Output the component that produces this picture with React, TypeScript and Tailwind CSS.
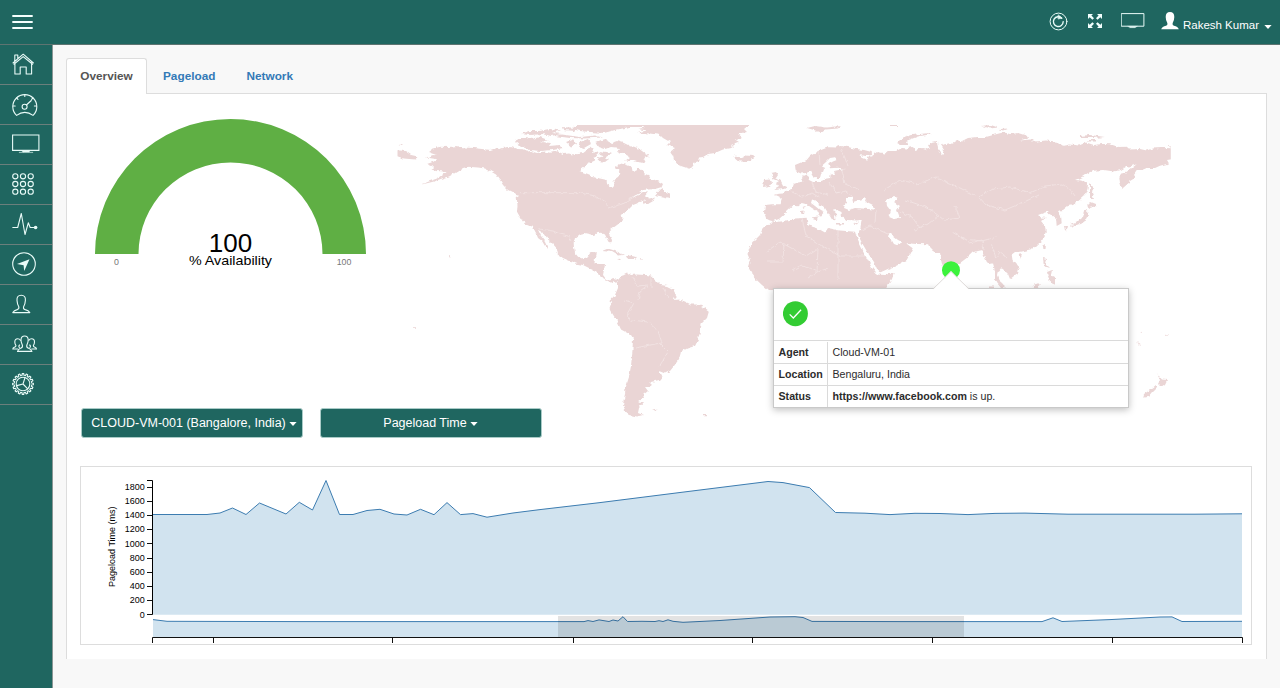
import React from "react";

const line = {
  fill: "none",
  stroke: "#e9fbf8",
  strokeWidth: 1.1,
  strokeLinejoin: "round" as const,
  strokeLinecap: "round" as const,
};

const gearPath = (() => {
  const teeth = 16;
  const pts: string[] = [];
  for (let i = 0; i < teeth; i++) {
    const a = (i / teeth) * Math.PI * 2;
    const s = (Math.PI * 2) / teeth;
    [
      [8.6, -0.3],
      [10.4, -0.2],
      [10.4, 0.2],
      [8.6, 0.3],
    ].forEach(([r, o]) => {
      const t = a + o * s;
      pts.push(`${(11 + r * Math.cos(t)).toFixed(2)},${(11 + r * Math.sin(t)).toFixed(2)}`);
    });
  }
  return `M${pts.join("L")}Z`;
})();

const sideIcons: React.ReactNode[] = [
  <svg key="home" width="23" height="24" viewBox="0 0 23 24" {...line}>
    <path d="M1 11 11.2 2.2 21.4 11M2.9 10.5V22H8.2V15H14.2V22H19.6V10.5M1.9 12.2 11.2 4.6 20.6 12.2M2.8 9V3H5.8V6.2" />
  </svg>,
  <svg key="gauge" width="26" height="24" viewBox="0 0 26 24" {...line}>
    <path d="M4.6 22.4A12 12 0 1 1 21 22.4Q12.8 16.3 4.6 22.4Z" />
    <circle cx="12.6" cy="13.8" r="2.5" />
    <path d="M14.4 12 19.3 7.5M12.8 1.5V3.5M4.6 5 6 6.4M1 13H3.2M22.4 13H24.6M19.6 6.4 21 5" />
  </svg>,
  <svg key="screen" width="28" height="20" viewBox="0 0 28 20" {...line} strokeLinejoin="miter">
    <path d="M.6 1H26.9V16.4H.6Z" />
    <path d="M9.5 16.5H18.3L17 18.2H21V18.6H7V18.2H11Z" fill="#e9fbf8" strokeWidth=".3" />
  </svg>,
  <svg key="grid" width="23" height="24" viewBox="0 0 23 24" {...line}>
    {[3.3, 11, 18.7].map((y) =>
      [3.3, 11, 18.7].map((x) => <circle key={`${x}-${y}`} cx={x} cy={y + 1} r="2.6" />),
    )}
  </svg>,
  <svg key="pulse" width="26" height="24" viewBox="0 0 26 24" {...line}>
    <path d="M.8 15.5H5.7L9.3 1.5 13 22.5 16.3 10.8 18.2 15.5H22" />
    <circle cx="23.6" cy="15.5" r="1.8" fill="#e9fbf8" stroke="none" />
  </svg>,
  <svg key="compass" width="25" height="25" viewBox="0 0 25 25" {...line}>
    <circle cx="12" cy="12" r="11.3" />
    <path d="M5 12.1 17.5 7.3 12.2 19.1 11.6 13.2Z" fill="#e9fbf8" stroke="none" />
  </svg>,
  <svg key="user" width="19" height="20" viewBox="0 0 19 20" {...line}>
    <path d="M6.8 12.8Q5.2 10 5 6.4Q4.6 1.2 9.2 1.2T13.4 6.4Q13.2 10 11.6 12.8Q11 15 13.2 15.6Q16.6 16.3 17.8 18.6H.8Q2 16.3 5.2 15.6Q7.4 15 6.8 12.8Z" />
  </svg>,
  <svg key="group" width="26" height="20" viewBox="0 0 26 20" {...line}>
    <path d="M10.4 11.2Q8.8 8 9 5.6Q9.3 2 12.6 2T16.2 5.6Q16.4 8 14.8 11.2Q14.2 13.6 16.6 14.3Q19 15 19.9 17.4H5.5Q6.4 15 8.6 14.3Q11 13.6 10.4 11.2Z" />
    <path d="M8.4 6.3Q7.6 4.8 5.7 4.8Q2.8 4.8 2.8 8Q2.8 10.3 4 11.6Q4 12.9 2.4 13.3Q1 13.8.8 15H5.6M7.4 13.5Q6.2 12.4 7.6 11M16.9 6.3Q17.7 4.8 19.6 4.8Q22.5 4.8 22.5 8Q22.5 10.3 21.3 11.6Q21.3 12.9 22.9 13.3Q24.3 13.8 24.5 15H19.7M17.9 13.5Q19.1 12.4 17.7 11" />
  </svg>,
  <svg key="gear" width="22" height="22" viewBox="0 0 22 22" {...line}>
    <path d={gearPath} />
    <circle cx="11" cy="11" r="6.8" />
    <path d="M11 11 13 4.6M11 11 4.8 12.6M11 11 15.7 15.8" />
  </svg>,
];

const land = [
  // North and Central America
  "M428 152 432 149 440 146.7 449 147 456.7 146 465 147.5 473 148 482 149 490 150 495 148.4 500 149 506 147 512 147.3 517 149 523 149.3 527 151.7 530 151 537 153 544 151.5 550 152.8 557 151 563 154 570 153.5 575 155 580 152 583 153.3 587 150 590 146.5 593 149 592 153 597 151.5 598 156 593 158 595 160 588 163.3 584 166 581 168.3 580.5 171 583 173.3 588 175 593 177.3 600 178.5 606.7 180 607 184 611 187 612.7 187.7 614.7 185 613.3 180 618.3 176.7 619.3 171.7 616 168 616.7 165 621 163.5 627 165 631.7 167 632.5 171 636 172 639 168 641.7 170 645 174 648 175 652 179 655 180 660 182 663 184 661.7 187 655 189 648 189.5 643 190 637 193 632 198 637 195.5 643 193 648 192.3 645 196 649 198.5 655 197.5 649 201 643 204.3 645 199.5 640 201 637 203.5 633 205 629 209 626.7 211.7 621.7 215 622.5 218 621 222 615 226.5 610 230 609.3 235 612 240 611.7 243 610 243.7 608 241 606.7 238 605 234.5 601 232.7 596.7 233 594 235 590 234 585 233 580 234.3 575 238 573.7 243 574 248 575 253 578 256.7 582 258.5 586.7 257.5 590 252.3 596.7 252 596.5 255 595 258.3 594.3 263.3 599 264 605 265 604 270 603 275 606 279 610 280.5 614 278 617 279 617.7 282 614 280.8 611.7 282.9 608 281 605 279.3 601 276 596.7 271.7 593 269.5 590 268.5 583 265 576.7 263.7 570 261 563 258 558 254.7 556.7 248.3 552 243 546.7 238.3 543 233 538 229.8 541 236 545 241 548 247.8 545 246 542 241 538 238 536 233 532.7 226.7 528 225 523 221.7 520 217 517 211.7 517.5 205 516.7 198.3 520 196 516 195 512 192 508 190 503 185 500 180 496 174.5 490 171 485 168.5 478 167.5 468 166.7 463 168 460 170 455 173 449 176.5 443 178.6 436 181 428 183 421.7 184.6 430 181 437 178.5 442 175 446.7 172.3 440 171.3 436 171 431.7 169.5 433 166.5 427 164 434 161.5 436 159 426 157.5 433 155 437 155.3Z",
  // Arctic Canada
  "M515 142 518 138 525 138 532 139 540 137 548 140 541 142 551 143 549 146 560 145 563 148 553 150 540 151 530 150 520 146Z",
  "M520 134 530 131 540 131 550 129 560 130.5 552 133 562 134 551 136 543 134 530 135Z M555 136 562 134.5 580 137 595 135.5 602 137.5 585 138.5 570 138Z M577 125 605 125 634 125 625 128 615 130 604 133 590 132 580 131 572 129Z M562 127 577 128 574 131 563 130Z",
  "M566 142 574 139 577 144 571 146.5Z M580 142 588 139 591 144 584 148 578 146Z M596 142 604 139 611 143 617 141 624 143 630 146 638 148 646 154 650 156 643 159 645 163 637 162 631 160 625 161 630 157 623 153 617 152 620 148 611 147 605 149 599 147Z",
  "M598 158 604 156 609 159 605 162 599 161Z",
  "M598 151 606 152 611 154 606 157 600 155Z M628 195 636 191 642 192 634 196Z M655 195 660 189 664 188 664 192 670 194.5 670 198 664 197Z M643 202 650 199 655 200 648 204Z",
  // Greenland and Iceland
  "M632 125 749 125 744 129 747 132 738 134 742 137 735 139.5 739 142 731 145 733 147.5 723 149.5 715 153 708 154 703 157 699 157.5 698 161 695 162 693 166 690 169 684 167 678 165 674 160 673 156 670 152 675 148 667 145 670 142 663 138 660 135 650 133.5 638 133 646 130.5 638 129 645 127.5Z M733 157 736 155.5 740 158 745 155.5 753 156 755 157.5 751.7 160 745 161.8 738 161.3Z",
  // Caribbean and Hawaii
  "M602 251 608 248.5 616 251 624 255 618 255.5 612 252Z M627 257 631 255.5 637 257 635 259 628 259Z M617 259 621 258.7 620 260.3Z M640 258.3H643V259.6H640Z M448 254.5 451 256 450 258Z",
  // South America
  "M618 280 622 275 627 272.5 631 275 637 274.5 645 275 651 275.5 656 280 661 285 667 286 673 289 676 295 674 300 680 299.5 686 302 691 304.5 698 304.5 705 308 709 311 707 318 702 323 700 331 698 340 695 346 687 348.5 681 352 679 359 674 366 670 371 665 373.5 659 371 661.5 377 659 380 651 382 650 387 645 387 648 391 643 395 644 398 639 401 643 403 639 408 638 413 643 415 637 416.5 630 415 625 411 623 404 625 395 625.5 388 629 377 631 366 632.5 350 633 338 631 335 621 329.5 617 321 612 313 609.5 308 611 304 610.5 300 615 295 618 288Z",
  "M652 409.5 658 408.5 656 410.5Z M703 414H706V415.3H703Z",
  // Eurasia
  "M765 205 772 204.3 780.7 204.3 781.7 198.3 779 196.5 775 194.8 779 193.8 783.3 193.5 787 190.5 791.7 189 793.5 184 798 182.5 803.3 181.7 802 176.7 808 174 809 180 813 182 818.3 182 824 180 830 179 830.7 174.5 835 174 834 171 840 169.7 846 169 838 167.7 830 168.3 828.3 163.3 833 160.5 836.7 159 835 157.3 830 158 826 162 822.7 165 824 168 823.3 170.5 820 174 819 178 814 178.3 812 175 810 171.5 806 173 801 173.5 795.7 171.3 795 165 801 162.5 806.7 160 810 156 815 153.3 821 150 828.3 147.3 836 147.5 840 146 848 147 856 149 864 150 871.7 152 872 155 866 156 858 155 862 158 867 160 869 157 872 156 878 152 885 153.5 888 151 896 151 902 148 906.7 148.5 913 147 915 150 922 148 930 150 928 146 930 142.5 937 141 938 149 942 154.5 944 150 941 145 946 144 953 142.5 957 140 961 141.5 968 138 976.7 137 986 137 995 134.5 1003 132.5 1010 134 1018 133 1026.7 135.7 1028 138 1020 140.5 1030 139.5 1036 141.5 1046 140.5 1056.7 141.7 1063 145.7 1070 144.5 1079 145.5 1086 142.5 1094 145 1102 144 1110 144.3 1119 147 1126.7 146.7 1130 149.5 1140 149 1146.7 150.5 1152 148.5 1162 148 1173 148.3 1173 159 1167 160 1169 163.5 1160 165.7 1155 168 1146.7 168 1142 170 1136.7 170 1134 174 1135 178 1130 181 1121.7 188.3 1120 183 1119.3 176.7 1122 174 1126.7 171.7 1132 168 1136.7 164.3 1130 166.5 1126.7 165.7 1120 170 1114 171.5 1104 170 1093 170.7 1088 173 1082 177 1075 180 1081 180.5 1085 182.3 1088 184 1087.5 189 1085 195 1079 200.5 1073 205 1068 206 1063 210 1058 211 1061 216 1061.7 223.3 1056.7 226 1056 218 1052 215 1048 214 1049 211.5 1045 212.5 1038 215 1041 217.5 1046 217.7 1041 221 1045 226 1045.7 231.7 1044 238 1040 243.3 1036 247 1030 249.5 1020 251.7 1015 252 1011.7 254.5 1012.5 260 1016 264 1019 268.3 1018 273.3 1014 276 1010 279 1008 274 1004 270 1001.7 268.3 999 271.7 998 276 999.5 280 1003 283 1006 288.5 1001 288 997 283 995 278 995 271 993 263.3 989 264 986.7 261.7 984 255 981.7 250 977 251 973 252.3 968 257 961.7 261.7 957 265 955 276 950 284 945 275 941.7 261.7 940 253 935 253 933 250 930 247 928 244.3 917 244 906.7 243.3 902 242 898 240 893 236 888 233 888 235 891 239 894 244 896.7 245 901 243 905 240.5 907 244 912.7 248.3 910 254 906.7 260 897 265.5 890 268 880 272.5 877.5 270 874 262 868 253.3 862 243 858 235 860 230 861.7 220 856 220.5 846.7 220 842 217 841.5 212 836.7 210 833 210.5 838 215 835 215.5 835.5 221 832 219.5 829 214.5 825 208 820 204.5 815 200.5 812 199.5 811 203 815 206 820 210 824 212 820 217 818.5 212 812 208 806.7 204.3 801.7 203 797 206.5 793 205.7 788 210 783.5 215 779 219 773 221 769 220.5 766 219 764 213Z",
  // Africa
  "M771.7 222.5 783 221.3 795 218.5 806.7 217.7 807 221 808 225.5 817 228 825 232.5 828 228 840 230.5 855 231.7 856 235 859 242 866.7 258 872 268 877 274.5 885 275 894 273 892 279 888 285 884 292 768 290 762 285 756.7 280 752 274 748 266.7 750 260 747.5 254 750 246.7 755 240 760 235 762 230 765 226.7Z",
  // British Isles and Mediterranean islands
  "M771 173 776 172 778 175 776 178 781 181 783 185 787 187 784 189 774 190 779 187 776 183 779 181 774 179 772 176Z M764 180 770 179.5 772 182 770 186 763 187Z M801.5 207 804.5 206 804 209ZM801 211 804.7 210.5 804 214.5 801.5 214.5Z M811 217.5 818 216.5 817 219.5Z M836 223H843V224.5H836Z M854 223 859 221.5 857 224.5Z",
  // Arctic Russia and Svalbard
  "M807 128 815 126 826 127.5 841 126 838 128.5 826 129.5 821 133 814 130Z M886 125H898V126H886Z M896 143 903 138 912 135 930 133 932 134 918 136.5 906 141 908 145 900 145Z M981 126 991 125 998 127.5 990 128.5Z M998 129 1008 128.5 1003 130.5Z M1079 136 1090 135 1105 137 1092 138 1081 138Z M1087 140H1096V141.5H1087Z M1168 145.3H1171V146.5H1168Z M398 145 403 144.5 402 146Z",
  "M395 150 405 151 411 155 418 156.5 415 159.5 404 158.5 395 155.5Z",
  // East Asia islands
  "M1090 183 1093 187 1092 193 1094 198 1090 198Z M1091 202 1096 204 1096 206 1090 208 1087 206Z M1087 210 1088 215 1085 221 1081 224 1076 225 1070 224 1078 221 1082 218 1084 212Z M1064 226 1068 226 1067 230 1065 230.5Z M1070 226 1074 225 1072 228Z M1042 246 1045 244 1044.5 249 1042.5 250Z M1018 255 1022 254 1020 259Z M1043 258 1047 259 1046 264 1050 268 1047 267 1044 266Z M1047 272 1052 270 1051 275 1055 277 1055 284 1050 282 1048 276Z M1034 285 1040 283 1038 289H1031Z M989 286.5H993V289H989Z",
  // New Zealand and Pacific
  "M1156.7 373 1159 376 1162 379.5 1167 380 1165 384 1161 387 1158 384 1160 380Z M1156 385 1158 387 1153 392 1149 397 1143 397.5 1144 394 1150 390Z M1137 342 1142 346 1139 345Z M1165 336 1169 333 1168 335.5Z M1141 330 1143 333 1142 333Z M413 327.2H416V328H413Z",
];

const waterPath =
  "M847 198 852 198 853 202 859 200 866 198 865 201 873 205 874 209.5 862 208.5 855 208 849 210 844 208Z M886 200 893 197 898 199 894 202 900 206 897 210 900 218 894 219 889 217 891 211 887 206Z";

const borderPath =
  "M520 192.7H580L595 196 606 202 608 208 622 204 634 197M539 229 553 231 560 234 568 236 571 241M632 277 638 286 648 285M651 276V288M624 300 634 303 627 315 632 322M632 320 648 322 658 331 662 343 650 345 635 348M660 344 668 352 659 367M648 286 640 292 638 300M663 287 668 298M766 252 780 242 806 256 818 248M802 218 806 236 838 255M838 230V256H866M784 243 783 262 768 262M818 249 817 272 808 278M838 256 838 280M792 270 802 265 818 272 828 268M860 231 870 226 888 234M875 222 876 210M790 191 803 197 812 193 820 198M812 183 816 192 828 195M829 182 836 193 846 191 853 197M820 165 819 151M841 148 848 166M842 171 845 184 860 190M884 190 900 180 918 184 936 177 960 188 976 196M905 200 920 205 935 212M900 212 912 217 920 228M935 213 944 220 960 218 955 206M914 230 928 224 938 216M979 197 993 189 1010 187 1030 193 1045 186 1062 184 1071 190 1075 196M979 197 986 205 1005 210 1024 202 1039 195M952 232 964 239 982 241 996 237M958 236 970 243 982 240M991 243 996 258 1000 252 1008 258M982 240 984 250";

const ring = "M95 254A135.5 135 0 0 1 366 254H322.5A92 91.5 0 0 0 138.5 254Z";

const mainLine =
  "M153 514.5H207L220 513 232.5 508 246 514.5 259.5 503 286 514 299.3 502.3 312.5 510 326 480.5 339.5 514.5 353 514.5 367 510.5 380 509.3 394 514 407 515 420.5 509.3 434 514.7 447 502.6 460.5 514.6 473 513.6 487 517.2 513 513 540 509.6 600 502.6 680 492.5 740 485 768 481.5 783 482.6 809.5 487.6 835.5 512.5 865 513.2 890 514.6 915 513.3 940 513.5 968 514.6 995 513.4 1025 513.1 1068 514.2H1195L1242 513.8";

const brushLine =
  "M153 619.6 167 621.3 300 621.6H584L588 620.6 593 621.5 599 619.9 609 621.5 613 620 618 621 623 616.7 627.5 621.5 642 621.3 655 621.5 659 620.7 663 621.5 668 619.8 673 621.3 683 622.3 720 620.5 770 617 795 616.7 803 617.5 812 621.4 900 621.6H1042L1053 617.8 1062 621.5 1110 619.6 1160 617 1172 616.9 1182 621.5 1242 621.3";

function Caret({ className = "" }: { className?: string }) {
  return (
    <svg width="8" height="4" viewBox="0 0 8 4" className={className}>
      <path d="M.4 0H7.6L4 4Z" fill="currentColor" />
    </svg>
  );
}

function Header() {
  return (
    <header className="flex h-[45px] items-start border-b border-[#5e7471] bg-[#1f6660] text-white">
      <svg width="22" height="16" viewBox="0 0 22 16" className="mt-[14px] ml-3">
        <path d="M.3 2H20.7M.3 8H20.7M.3 14H20.7" stroke="#f4fffd" strokeWidth="1.9" />
      </svg>
      <div className="ml-auto flex items-start">
        <svg width="19" height="19" viewBox="0 0 19 19" className="mt-3" {...line}>
          <circle cx="9.5" cy="9.5" r="8.4" strokeWidth="1" />
          <path d="M12.8 6.2A4.9 4.9 0 1 0 14.2 9.6" strokeWidth="1.4" />
          <path d="M9.4 3 13 6 9.4 7Z" fill="#e9fbf8" strokeWidth=".6" />
        </svg>
        <svg width="14" height="14" viewBox="0 0 14 14" className="mt-[14px] ml-5" fill="#f2fffd">
          <path d="M0 0H5L3.4 1.6 6 4.2 4.4 5.8 1.7 3.2 0 4.9ZM14 0V4.9L12.3 3.2 9.6 5.8 8 4.2 10.6 1.6 9 0ZM0 14V9.1L1.7 10.8 4.4 8.2 6 9.8 3.4 12.4 5 14ZM14 14H9L10.6 12.4 8 9.8 9.6 8.2 12.3 10.8 14 9.1Z" />
        </svg>
        <svg width="24" height="17" viewBox="0 0 24 17" className="mt-[12px] ml-[19px]" {...line} strokeLinejoin="miter">
          <path d="M.6 1.6H22.9V14.2H.6Z" strokeWidth="1" />
          <path d="M7 14.2H16.5L14 15.7H9Z" fill="#e9fbf8" strokeWidth=".3" />
        </svg>
        <svg width="18" height="18" viewBox="0 0 18 18" className="mt-[12px] ml-4" fill="#fff">
          <path d="M6.4 11.2Q4.7 8.5 4.7 5Q4.7 0 9 0T13.3 5Q13.3 8.5 11.6 11.2Q11.2 13.2 13 13.8Q16.8 14.6 17.8 17.3H.2Q1.2 14.6 5 13.8Q6.8 13.2 6.4 11.2Z" />
        </svg>
        <span className="mt-[17px] ml-[4px] text-[11.5px] leading-4 whitespace-nowrap">Rakesh Kumar</span>
        <Caret className="mt-[25px] mr-[8px] ml-[5px]" />
      </div>
    </header>
  );
}

const iconPlace = ["pt-[7px]", "pt-[8px]", "pt-[9px]", "pt-[7px]", "pt-[7px]", "pt-[7px]", "pt-[9px]", "pt-[9px]", "pt-[8px]"];

function Sidebar() {
  return (
    <nav className="w-[53px] shrink-0 border-r border-[#8a9694] bg-[#1f6660]">
      {sideIcons.map((icon, i) => (
        <div key={i} className={`h-10 border-b border-[#6b7f7c] pl-3 ${iconPlace[i]}`}>
          {icon}
        </div>
      ))}
    </nav>
  );
}

function WorldMap() {
  return (
    <svg width="790" height="304" viewBox="390 118 790 304" className="block shrink-0">
      <defs>
        <filter id="coast" filterUnits="userSpaceOnUse" x="390" y="118" width="790" height="304">
          <feTurbulence type="fractalNoise" baseFrequency="0.22" numOctaves="2" seed="4" result="n" />
          <feDisplacementMap in="SourceGraphic" in2="n" scale="4" xChannelSelector="R" yChannelSelector="G" />
        </filter>
        <clipPath id="frame">
          <rect x="397.5" y="125" width="773.3" height="294" />
        </clipPath>
      </defs>
      <g clipPath="url(#frame)">
        <g filter="url(#coast)">
          <path d={land.join(" ")} fill="#ead5d5" />
          <path d="M577 122H634V127H577ZM632 122H749V127H632Z" fill="#ead5d5" />
          <path d={waterPath} fill="#fff" />
          <path d={borderPath} fill="none" stroke="#f3e5e5" strokeWidth=".8" />
        </g>
      </g>
      <circle cx="951" cy="270.2" r="9" fill="#3cf23c" />
    </svg>
  );
}

function AgentPopup() {
  const rows: [string, React.ReactNode, string][] = [
    ["Agent", "Cloud-VM-01", "h-[23px] pt-px"],
    ["Location", "Bengaluru, India", "h-[22px]"],
    ["Status", <span key="s"><b>https://www.facebook.com</b> is up.</span>, "h-[22px]"],
  ];
  return (
    <div className="absolute top-[194px] left-[706px] h-[120px] w-[356px] border border-[#c9c9c9] bg-white text-[10.65px] text-[#2c2c2c] shadow-[0_2px_7px_rgba(0,0,0,0.25)]">
      <svg width="38" height="19" viewBox="0 0 38 19" className="absolute -top-[18px] left-[158px]">
        <path d="M1 18.5 19 0 37 18.5V19H1Z" fill="#fff" />
        <path d="M1 18 19 .5 37 18" fill="none" stroke="#d5d0ce" strokeWidth=".8" />
      </svg>
      <div className="h-[51px] pt-3 pl-[9px]">
        <svg width="26" height="26" viewBox="0 0 26 26">
          <circle cx="12.4" cy="12.7" r="12.5" fill="#33cc33" />
          <path d="M6.7 13.4 10.3 17 18.1 8.8" fill="none" stroke="#fff" strokeWidth="1.3" />
        </svg>
      </div>
      {rows.map(([k, v, h]) => (
        <div key={k} className={`flex items-center border-t border-[#dadada] ${h}`}>
          <div className="flex h-full w-[54px] items-center border-r border-[#dadada] pl-[4.5px] font-bold">{k}</div>
          <div className="pl-[4.5px] whitespace-nowrap">{v}</div>
        </div>
      ))}
    </div>
  );
}

function Gauge() {
  return (
    <svg width="290" height="170" viewBox="80 110 290 170" className="mt-4 ml-[13px] block shrink-0">
      <path d={ring} fill="#5faf44" />
      <g textAnchor="middle">
        <text x="230.5" y="251.5" fontSize="26" fill="#000">100</text>
        <text x="230.5" y="265" fontSize="13.6" fill="#000" textLength="83" lengthAdjust="spacingAndGlyphs">% Availability</text>
        <g fontSize="8.8" fill="#777">
          <text x="116.4" y="265">0</text>
          <text x="344" y="265">100</text>
        </g>
      </g>
    </svg>
  );
}

function LoadChart() {
  return (
    <div className="mt-[28px] ml-[13px] h-[179px] w-[1172px] border border-[#dddddd]">
      <svg width="1170" height="177" viewBox="81 467 1170 177" className="block">
        <path d={`${mainLine}V614.7H153Z`} fill="#d1e3ef" />
        <path d={mainLine} fill="none" stroke="#3c7cb0" strokeWidth="1" />
        <path d="M147 480.5H152.5V614.5H147" fill="none" stroke="#000" />
        <g fontSize="9" fill="#000" textAnchor="end">
          {[0, 200, 400, 600, 800, 1000, 1200, 1400, 1600, 1800].map((v) => {
            const y = 614.5 - v * 0.0711;
            return (
              <g key={v}>
                <path d={`M147 ${Math.round(y) + (v === 0 ? -0.5 : 0.5)}H152`} stroke="#111" />
                <text x="144.7" y={y + 3.1}>{v}</text>
              </g>
            );
          })}
        </g>
        <text transform="translate(115 546.7) rotate(-90)" textAnchor="middle" fontSize="9" fill="#000">
          Pageload Time (ms)
        </text>
        <path d={`${brushLine}V637H153Z`} fill="#d1e3ef" />
        <path d={brushLine} fill="none" stroke="#3c7cb0" strokeWidth="1" />
        <path d="M558 616H964V637H558Z" fill="#000" fillOpacity=".11" />
        <path
          d="M152.5 643V637.5H1242.5V643M213.5 638V643M392.5 638V643M573.5 638V643M752.5 638V643M932.5 638V643M1112.5 638V643"
          fill="none"
          stroke="#111"
        />
      </svg>
    </div>
  );
}

const buttonClass =
  "flex h-[30px] w-[222px] items-center justify-center rounded-[3px] border border-[#a9cbc7] bg-[#1f6660] pt-px text-[12.5px] whitespace-nowrap text-white";

export default function App() {
  return (
    <div className="h-[688px] w-[1280px] overflow-hidden bg-[#f8f8f8] font-['Liberation_Sans',Arial,sans-serif]">
      <Header />
      <div className="flex h-[643px]">
        <Sidebar />
        <main className="pt-[13px] pl-[13px]">
          <div className="relative z-10 -mb-px flex h-9 text-[11.8px] font-bold text-[#337ab7]">
            <div className="flex w-[81px] items-center justify-center rounded-t-[3px] border border-b-0 border-[#dddddd] bg-white text-[#555]">
              Overview
            </div>
            <div className="flex items-center pt-px pl-4">Pageload</div>
            <div className="flex items-center pt-px pl-[31px]">Network</div>
          </div>
          <section className="relative h-[566px] w-[1201px] border border-b-0 border-[#dddddd] bg-white">
            <div className="flex h-[314px]">
              <Gauge />
              <div className="mt-6 ml-5">
                <WorldMap />
              </div>
            </div>
            <div className="relative flex gap-[17px] pl-[13.5px]">
              <button className={`${buttonClass} pl-[5px]`}>
                CLOUD-VM-001 (Bangalore, India)
                <Caret className="ml-[3px]" />
              </button>
              <button className={buttonClass}>
                Pageload Time
                <Caret className="ml-[3px]" />
              </button>
            </div>
            <LoadChart />
            <AgentPopup />
          </section>
        </main>
      </div>
    </div>
  );
}
